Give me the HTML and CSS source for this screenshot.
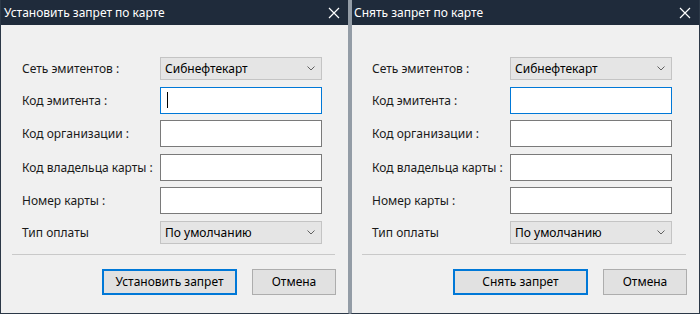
FILE: index.html
```html
<!DOCTYPE html>
<html lang="ru">
<head>
    <meta charset="UTF-8">
    <title>Запрет по карте</title>
    <link rel="stylesheet" href="styles.css">
</head>
<body>
    <div class="desk">
        <div class="window first">
            <div class="titlebar">
                <span class="title">Установить запрет по карте</span>
                <svg class="close" width="12" height="12" viewBox="0 0 12 12"><path d="M1 1L11 11M11 1L1 11" stroke="#fff" stroke-width="1.2"/></svg>
            </div>
            <div class="body">
                <div class="form">
                    <span class="label">Сеть эмитентов :</span>
                    <div class="combo"><span>Сибнефтекарт</span><svg width="8" height="5" viewBox="0 0 8 5"><path d="M0.5 0.5L4 4L7.5 0.5" fill="none" stroke="#606060"/></svg></div>
                    <span class="label">Код эмитента :</span>
                    <div class="field focus"><span class="caret"></span></div>
                    <span class="label">Код организации :</span>
                    <div class="field"></div>
                    <span class="label">Код владельца карты :</span>
                    <div class="field"></div>
                    <span class="label">Номер карты :</span>
                    <div class="field"></div>
                    <span class="label">Тип оплаты</span>
                    <div class="combo"><span>По умолчанию</span><svg width="8" height="5" viewBox="0 0 8 5"><path d="M0.5 0.5L4 4L7.5 0.5" fill="none" stroke="#606060"/></svg></div>
                </div>
                <div class="sep"></div>
                <div class="buttons">
                    <button class="btn default wide">Установить запрет</button>
                    <button class="btn">Отмена</button>
                </div>
            </div>
        </div>
        <div class="window second">
            <div class="titlebar">
                <span class="title">Снять запрет по карте</span>
                <svg class="close" width="12" height="12" viewBox="0 0 12 12"><path d="M1 1L11 11M11 1L1 11" stroke="#fff" stroke-width="1.2"/></svg>
            </div>
            <div class="body">
                <div class="form">
                    <span class="label">Сеть эмитентов :</span>
                    <div class="combo"><span>Сибнефтекарт</span><svg width="8" height="5" viewBox="0 0 8 5"><path d="M0.5 0.5L4 4L7.5 0.5" fill="none" stroke="#606060"/></svg></div>
                    <span class="label">Код эмитента :</span>
                    <div class="field focus"></div>
                    <span class="label">Код организации :</span>
                    <div class="field"></div>
                    <span class="label">Код владельца карты :</span>
                    <div class="field"></div>
                    <span class="label">Номер карты :</span>
                    <div class="field"></div>
                    <span class="label">Тип оплаты</span>
                    <div class="combo"><span>По умолчанию</span><svg width="8" height="5" viewBox="0 0 8 5"><path d="M0.5 0.5L4 4L7.5 0.5" fill="none" stroke="#606060"/></svg></div>
                </div>
                <div class="sep"></div>
                <div class="buttons">
                    <button class="btn default wide">Снять запрет</button>
                    <button class="btn">Отмена</button>
                </div>
            </div>
        </div>
    </div>
</body>
</html>
```

FILE: styles.css
```css
*{
    margin: 0;
    padding: 0;
    box-sizing: border-box;
}
body{
    background-color: #939ca6;
    font-family: "Noto Sans", "Open Sans", sans-serif;
    font-size: 12px;
    color: #000;
}
.desk{
    display: flex;
    width: 700px;
    height: 314px;
}
.window{
    width: 350px;
    height: 314px;
    display: flex;
    flex-direction: column;
    border-bottom: 1px solid #2b3847;
}
.first{
    border-left: 1px solid #2b3847;
    border-right: 2px solid #939ca6;
}
.second{
    border-left: 2px solid #939ca6;
    border-right: 1px solid #2b3847;
}
.titlebar{
    height: 25px;
    background-color: #1f2b3b;
    color: #fff;
    display: flex;
    align-items: center;
    justify-content: space-between;
    padding: 0 8px 0 3px;
}
.second .titlebar{
    padding-left: 2px;
}
.title{
    font-size: 12px;
    margin-top: -1px;
}
.close{
    display: block;
}
.body{
    flex: 1;
    background-color: #f0f0f0;
    padding: 32px 0 0 0;
}
.form{
    display: grid;
    grid-template-columns: 138px 162px;
    row-gap: 6.5px;
    padding-left: 21px;
    align-items: center;
}
.second .form{
    padding-left: 20px;
}
.label{
    color: #1a1a1a;
    white-space: nowrap;
}
.combo{
    height: 23px;
    background-color: #e5e5e5;
    border: 1px solid #c4c4c4;
    display: flex;
    align-items: center;
    justify-content: space-between;
    padding: 0 6px 0 4px;
}
.field{
    height: 27px;
    background-color: #fff;
    border: 1px solid #7a7a7a;
    position: relative;
}
.field.focus{
    border-color: #0078d7;
}
.caret{
    position: absolute;
    left: 6px;
    top: 4px;
    width: 1px;
    height: 16px;
    background-color: #000;
}
.sep{
    margin: 10px 13px 0 11px;
    height: 1px;
    background-color: #c9c9c9;
}
.second .sep{
    margin: 10px 13px 0 10px;
}
.buttons{
    display: flex;
    justify-content: flex-end;
    gap: 15px;
    padding: 14px 12px 0 0;
}
.btn{
    font-family: "Noto Sans", "Open Sans", sans-serif;
    font-size: 12px;
    color: #000;
    height: 26px;
    width: 84px;
    background-color: #e1e1e1;
    border: 1px solid #adadad;
}
.btn.wide{
    width: 135px;
}
.btn.default{
    border: 2px solid #0078d7;
}
```
